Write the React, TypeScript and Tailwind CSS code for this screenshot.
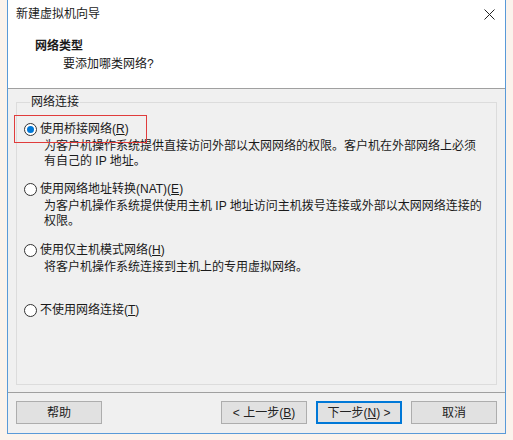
// VMware new VM wizard - network type page
import React, { useState } from "react";

const FONT = { fontFamily: '"Liberation Sans", "Noto Sans CJK SC", sans-serif' };

// Options shown in the group box
const OPTIONS = [
  {
    id: "bridged",
    label: "使用桥接网络",
    key: "R",
    desc: ["为客户机操作系统提供直接访问外部以太网网络的权限。客户机在外部网络上必须", "有自己的 IP 地址。"],
  },
  {
    id: "nat",
    label: "使用网络地址转换(NAT)",
    key: "E",
    desc: ["为客户机操作系统提供使用主机 IP 地址访问主机拨号连接或外部以太网网络连接的", "权限。"],
  },
  {
    id: "host",
    label: "使用仅主机模式网络",
    key: "H",
    desc: ["将客户机操作系统连接到主机上的专用虚拟网络。"],
  },
  { id: "none", label: "不使用网络连接", key: "T", desc: [] },
];

function Radio({ checked }: { checked: boolean }) {
  return (
    <span className="flex h-[13px] w-[13px] shrink-0 items-center justify-center rounded-full border border-[#333333] bg-white">
      {checked && <span className="h-[7px] w-[7px] rounded-full bg-[#0078d7]" />}
    </span>
  );
}

function Btn({ children, primary }: { children: React.ReactNode; primary?: boolean }) {
  return (
    <button
      className={`flex h-[23px] w-[86px] items-center justify-center bg-[#e1e1e1] text-[12px] text-[#222] ${
        primary ? "border-2 border-[#0078d7]" : "border border-[#adadad]"
      }`}
    >
      {children}
    </button>
  );
}

export default function App() {
  const [sel, setSel] = useState("bridged");
  const gaps = ["mt-[12px]", "mt-[12px]", "mt-[13px]", "mt-[27px]"];

  return (
    <div className="h-[440px] w-[513px] overflow-hidden bg-[#fbf3ec] pl-[7px]" style={FONT}>
      <div className="relative flex h-[434px] w-[499px] flex-col border-x border-b border-[#5a9ad8] bg-[#f0f0f0] text-[12px] text-[#1a1a1a]">
        {/* Title bar */}
        <div className="flex h-[27px] shrink-0 items-center justify-between bg-white pl-[8px] pr-[10px]">
          <span className="leading-[16px]">新建虚拟机向导</span>
          <svg width="11" height="11" viewBox="0 0 11 11" className="mt-[2px]">
            <path d="M0.5 0.5 L10.5 10.5 M10.5 0.5 L0.5 10.5" stroke="#222" strokeWidth="1" />
          </svg>
        </div>

        {/* Header */}
        <div className="h-[62px] shrink-0 border-b border-[#a0a0a0] bg-white pl-[27px] pt-[11px]">
          <div className="font-bold leading-[16px]">网络类型</div>
          <div className="mt-[2px] pl-[28px] leading-[16px]">要添加哪类网络?</div>
        </div>

        {/* Body */}
        <div className="flex-1 px-[8px] pt-[6px]">
          <fieldset className="h-[290px] border border-[#dcdcdc] pl-[7px]">
            <legend className="ml-[6px] px-[1px] leading-[14px]">网络连接</legend>
            {OPTIONS.map((o, i) => (
              <div key={o.id} className={gaps[i]}>
                <label className="flex cursor-default items-center gap-[3px] leading-[16px]" onClick={() => setSel(o.id)}>
                  <Radio checked={sel === o.id} />
                  <span>
                    {o.label}(<span className="underline">{o.key}</span>)
                  </span>
                </label>
                {o.desc.length > 0 && (
                  <div className="mt-[2px] pl-[20px] leading-[15px]">
                    {o.desc.map((d) => (
                      <div key={d}>{d}</div>
                    ))}
                  </div>
                )}
              </div>
            ))}
          </fieldset>
        </div>

        {/* Highlight annotation */}
        <div className="pointer-events-none absolute left-[6px] top-[115px] h-[28px] w-[133px] border border-[#e03c3c]" />

        {/* Footer */}
        <div className="h-[41px] shrink-0 border-t border-[#a0a0a0] px-[8px] pt-[8px]">
          <div className="flex items-center">
            <Btn>帮助</Btn>
            <div className="ml-auto flex gap-[9px]">
              <Btn>
                &lt; 上一步(<span className="underline">B</span>)
              </Btn>
              <Btn primary>
                下一步(<span className="underline">N</span>) &gt;
              </Btn>
              <Btn>取消</Btn>
            </div>
          </div>
        </div>
      </div>
    </div>
  );
}
